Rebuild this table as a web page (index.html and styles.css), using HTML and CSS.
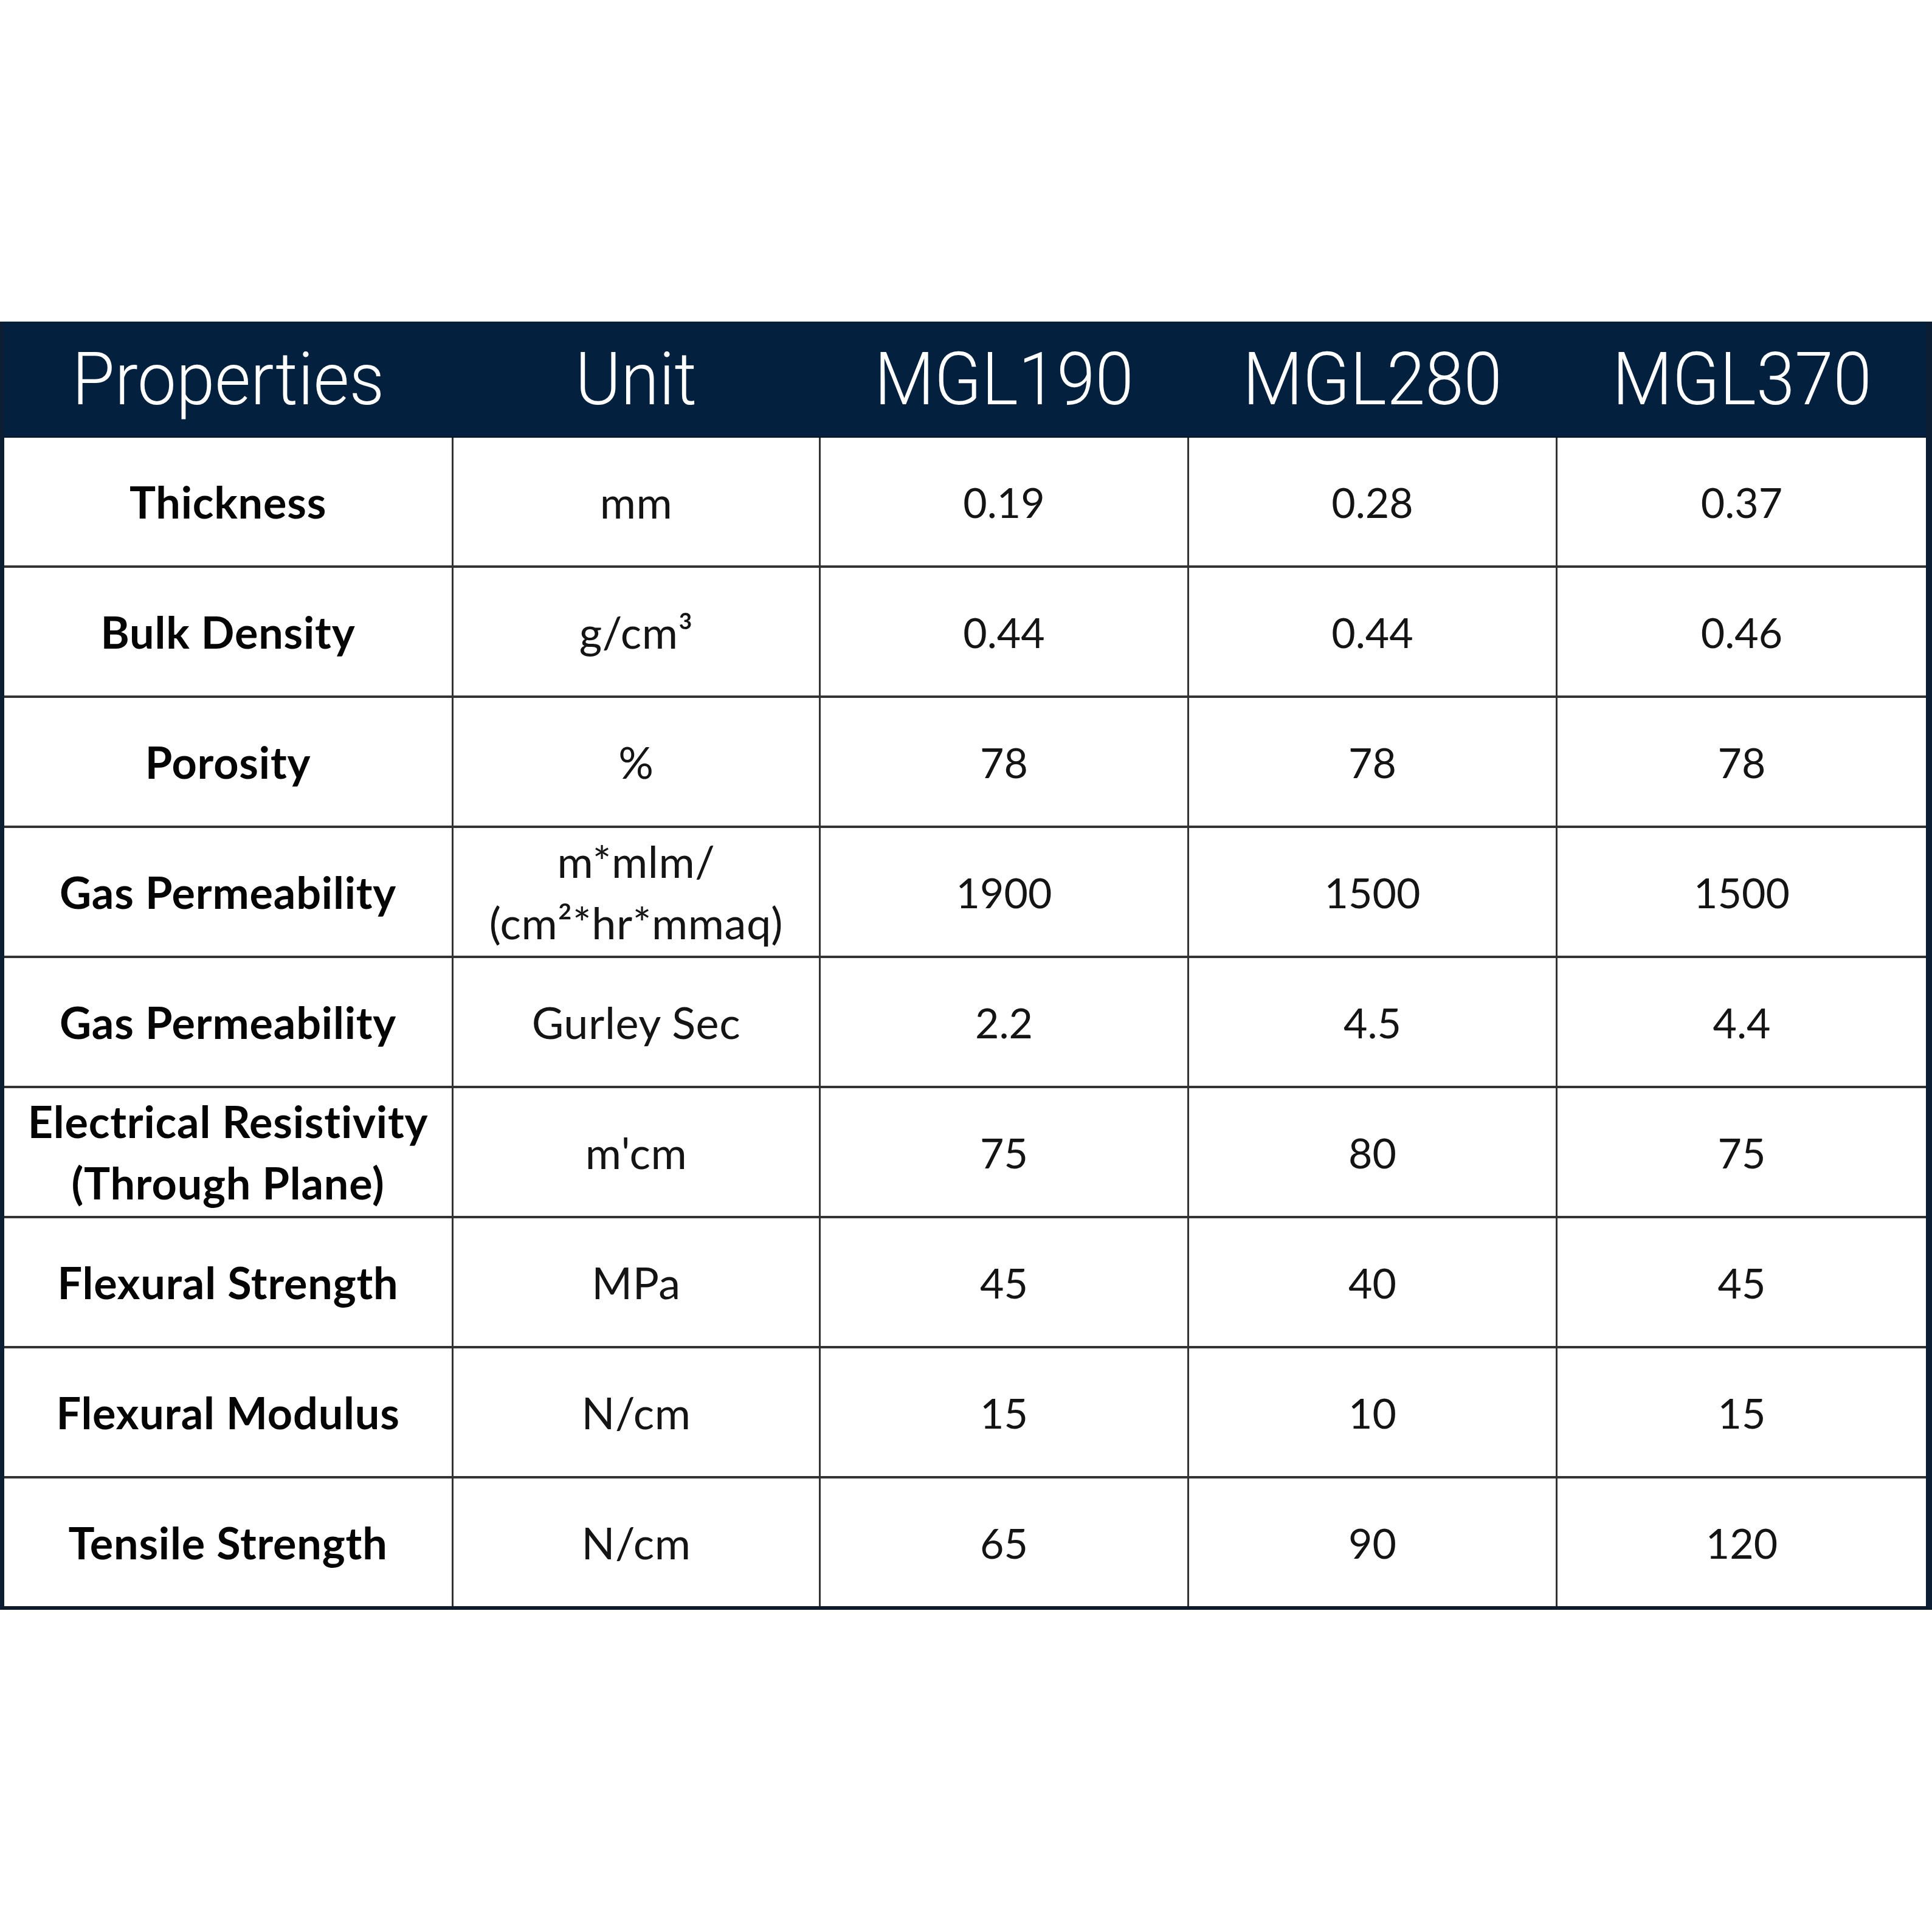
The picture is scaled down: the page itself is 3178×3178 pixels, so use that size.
FILE: index.html
```html
<!DOCTYPE html>
<html>
<head>
<meta charset="utf-8">
<link rel="stylesheet" href="styles.css">
</head>
<body>
<div class="page">
  <div class="sheet">
    <div class="head">
      <div class="hcell"><span class="ht">Properties</span></div>
      <div class="hcell"><span class="ht">Unit</span></div>
      <div class="hcell"><span class="ht">MGL190</span></div>
      <div class="hcell"><span class="ht">MGL280</span></div>
      <div class="hcell"><span class="ht">MGL370</span></div>
    </div>
    <div class="body">
      <div class="cell label">Thickness</div>
      <div class="cell unit">mm</div>
      <div class="cell">0.19</div>
      <div class="cell">0.28</div>
      <div class="cell">0.37</div>

      <div class="cell label">Bulk Density</div>
      <div class="cell unit">g/cm³</div>
      <div class="cell">0.44</div>
      <div class="cell">0.44</div>
      <div class="cell">0.46</div>

      <div class="cell label">Porosity</div>
      <div class="cell unit">%</div>
      <div class="cell">78</div>
      <div class="cell">78</div>
      <div class="cell">78</div>

      <div class="cell label">Gas Permeability</div>
      <div class="cell unit">m*mlm/<br>(cm²*hr*mmaq)</div>
      <div class="cell">1900</div>
      <div class="cell">1500</div>
      <div class="cell">1500</div>

      <div class="cell label">Gas Permeability</div>
      <div class="cell unit">Gurley Sec</div>
      <div class="cell">2.2</div>
      <div class="cell">4.5</div>
      <div class="cell">4.4</div>

      <div class="cell label">Electrical Resistivity<br>(Through Plane)</div>
      <div class="cell unit">m'cm</div>
      <div class="cell">75</div>
      <div class="cell">80</div>
      <div class="cell">75</div>

      <div class="cell label">Flexural Strength</div>
      <div class="cell unit">MPa</div>
      <div class="cell">45</div>
      <div class="cell">40</div>
      <div class="cell">45</div>

      <div class="cell label">Flexural Modulus</div>
      <div class="cell unit">N/cm</div>
      <div class="cell">15</div>
      <div class="cell">10</div>
      <div class="cell">15</div>

      <div class="cell label">Tensile Strength</div>
      <div class="cell unit">N/cm</div>
      <div class="cell">65</div>
      <div class="cell">90</div>
      <div class="cell">120</div>
    </div>
  </div>
</div>
</body>
</html>
```

FILE: styles.css
```css
html, body {
  margin: 0;
  padding: 0;
  background: #ffffff;
}

.page {
  width: 3178px;
  height: 3178px;
  padding-top: 529px;
  box-sizing: border-box;
}

.sheet {
  width: 3178px;
  box-sizing: border-box;
  border-left: 7px solid #0b1e33;
  border-right: 10px solid #0b1e33;
  border-bottom: 6px solid #0d1a2a;
  background: #333333;
}

.head {
  display: grid;
  grid-template-columns: 736px 601px 603px 603px 606px;
  column-gap: 3px;
  height: 191px;
  background: #03213e;
  border-bottom: 2px solid #021426;
  box-sizing: border-box;
}

.hcell {
  display: flex;
  align-items: center;
  justify-content: center;
  color: #ffffff;
  font-family: Roboto, "Liberation Sans", sans-serif;
  font-weight: 300;
  font-size: 120px;
  line-height: 1;
}

.ht {
  display: inline-block;
  transform: scaleX(0.95);
}

.body {
  display: grid;
  grid-template-columns: 736px 601px 603px 603px 606px;
  grid-auto-rows: 210px;
  column-gap: 3px;
  row-gap: 4px;
}

.cell {
  background: #ffffff;
  display: flex;
  align-items: center;
  justify-content: center;
  text-align: center;
  font-family: Lato, "Open Sans", sans-serif;
  font-size: 68px;
  line-height: 101px;
  color: #141414;
}

.unit {
  font-size: 72px;
  letter-spacing: 0.6px;
}

.label {
  font-size: 72px;
  letter-spacing: 0.8px;
  font-weight: 700;
  color: #050505;
}
```
